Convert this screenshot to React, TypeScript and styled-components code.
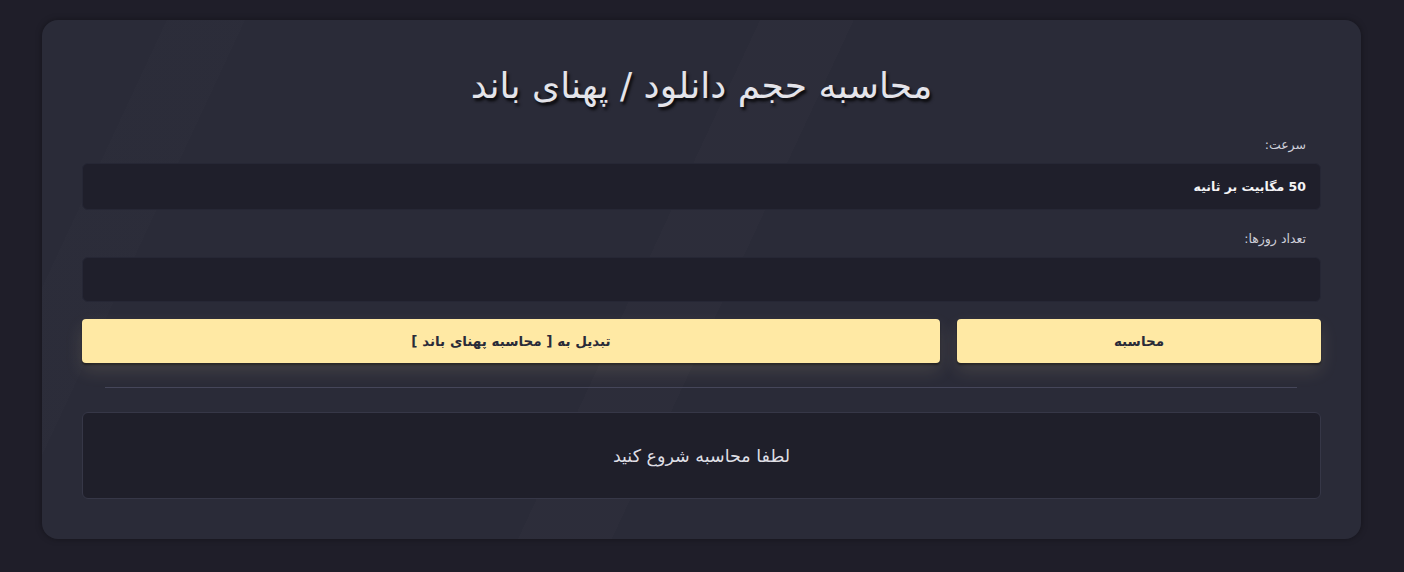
import styled, { createGlobalStyle } from 'styled-components';

const GlobalStyle = createGlobalStyle`
  html, body {
    margin: 0;
    padding: 0;
    background: #1f1e29;
  }
  body {
    font-family: "DejaVu Sans", "Noto Sans", sans-serif;
  }
`;

const Page = styled.div`
  padding: 20px 43px 33px 42px;
`;

const Card = styled.div`
  direction: rtl;
  position: relative;
  overflow: hidden;
  background-color: #2a2b38;
  background-image:
    linear-gradient(115deg, transparent 46%, rgba(255, 255, 255, 0.012) 46%, rgba(255, 255, 255, 0.012) 52%, transparent 52%),
    linear-gradient(115deg, transparent 8%, rgba(255, 255, 255, 0.008) 8%, rgba(255, 255, 255, 0.008) 13%, transparent 13%);
  border-radius: 16px;
  padding: 41px 40px 40px;
  box-shadow: 0 0 6px rgba(0, 0, 0, 0.35);
`;

const Title = styled.h1`
  margin: 0 0 24px;
  text-align: center;
  font-size: 36px;
  line-height: 50px;
  font-weight: 400;
  color: #e4e4ea;
  text-shadow: 2px 3px 3px rgba(0, 0, 0, 0.8);
`;

const Field = styled.div<{ $gap: number }>`
  display: flex;
  flex-direction: column;
  gap: 8px;
  margin-bottom: ${(p) => p.$gap}px;
`;

const Label = styled.label`
  font-size: 12.5px;
  line-height: 20px;
  color: #cfcfd8;
  padding-right: 15px;
`;

const TextInput = styled.input<{ $h: number }>`
  box-sizing: border-box;
  width: 100%;
  height: ${(p) => p.$h}px;
  direction: rtl;
  background: #1f1f2b;
  border: 1px solid #262735;
  border-radius: 6px;
  padding: 0 14px;
  font-family: inherit;
  font-size: 12.5px;
  font-weight: 700;
  color: #f4f4f6;
  outline: none;
`;

const Buttons = styled.div`
  display: grid;
  grid-template-columns: 364px 1fr;
  gap: 17px;
  margin-top: 17px;
`;

const Button = styled.button`
  height: 44px;
  border: none;
  border-radius: 4px;
  background: #ffe9a4;
  color: #2a2b38;
  font-family: inherit;
  font-size: 13.5px;
  font-weight: 700;
  box-shadow: 0 8px 18px rgba(255, 233, 164, 0.12), 0 2px 2px rgba(0, 0, 0, 0.5);
  cursor: pointer;
`;

const Divider = styled.hr`
  margin: 24px 24px 24px 23px;
  border: none;
  border-top: 1px solid #45465a;
`;

const Result = styled.div`
  box-sizing: border-box;
  height: 87px;
  display: flex;
  align-items: center;
  justify-content: center;
  background: #1f1f2a;
  border: 1px solid #363747;
  border-radius: 6px;
  font-size: 17.5px;
  color: #dedee4;
`;

export default function App() {
  return (
    <>
      <GlobalStyle />
      <Page>
        <Card>
          <Title>محاسبه حجم دانلود / پهنای باند</Title>
          <Field $gap={19}>
            <Label>سرعت:</Label>
            <TextInput $h={47} defaultValue="50 مگابیت بر ثانیه" />
          </Field>
          <Field $gap={0}>
            <Label>تعداد روزها:</Label>
            <TextInput $h={45} defaultValue="" />
          </Field>
          <Buttons>
            <Button>محاسبه</Button>
            <Button>تبدیل به [ محاسبه پهنای باند ]</Button>
          </Buttons>
          <Divider />
          <Result>لطفا محاسبه شروع کنید</Result>
        </Card>
      </Page>
    </>
  );
}
